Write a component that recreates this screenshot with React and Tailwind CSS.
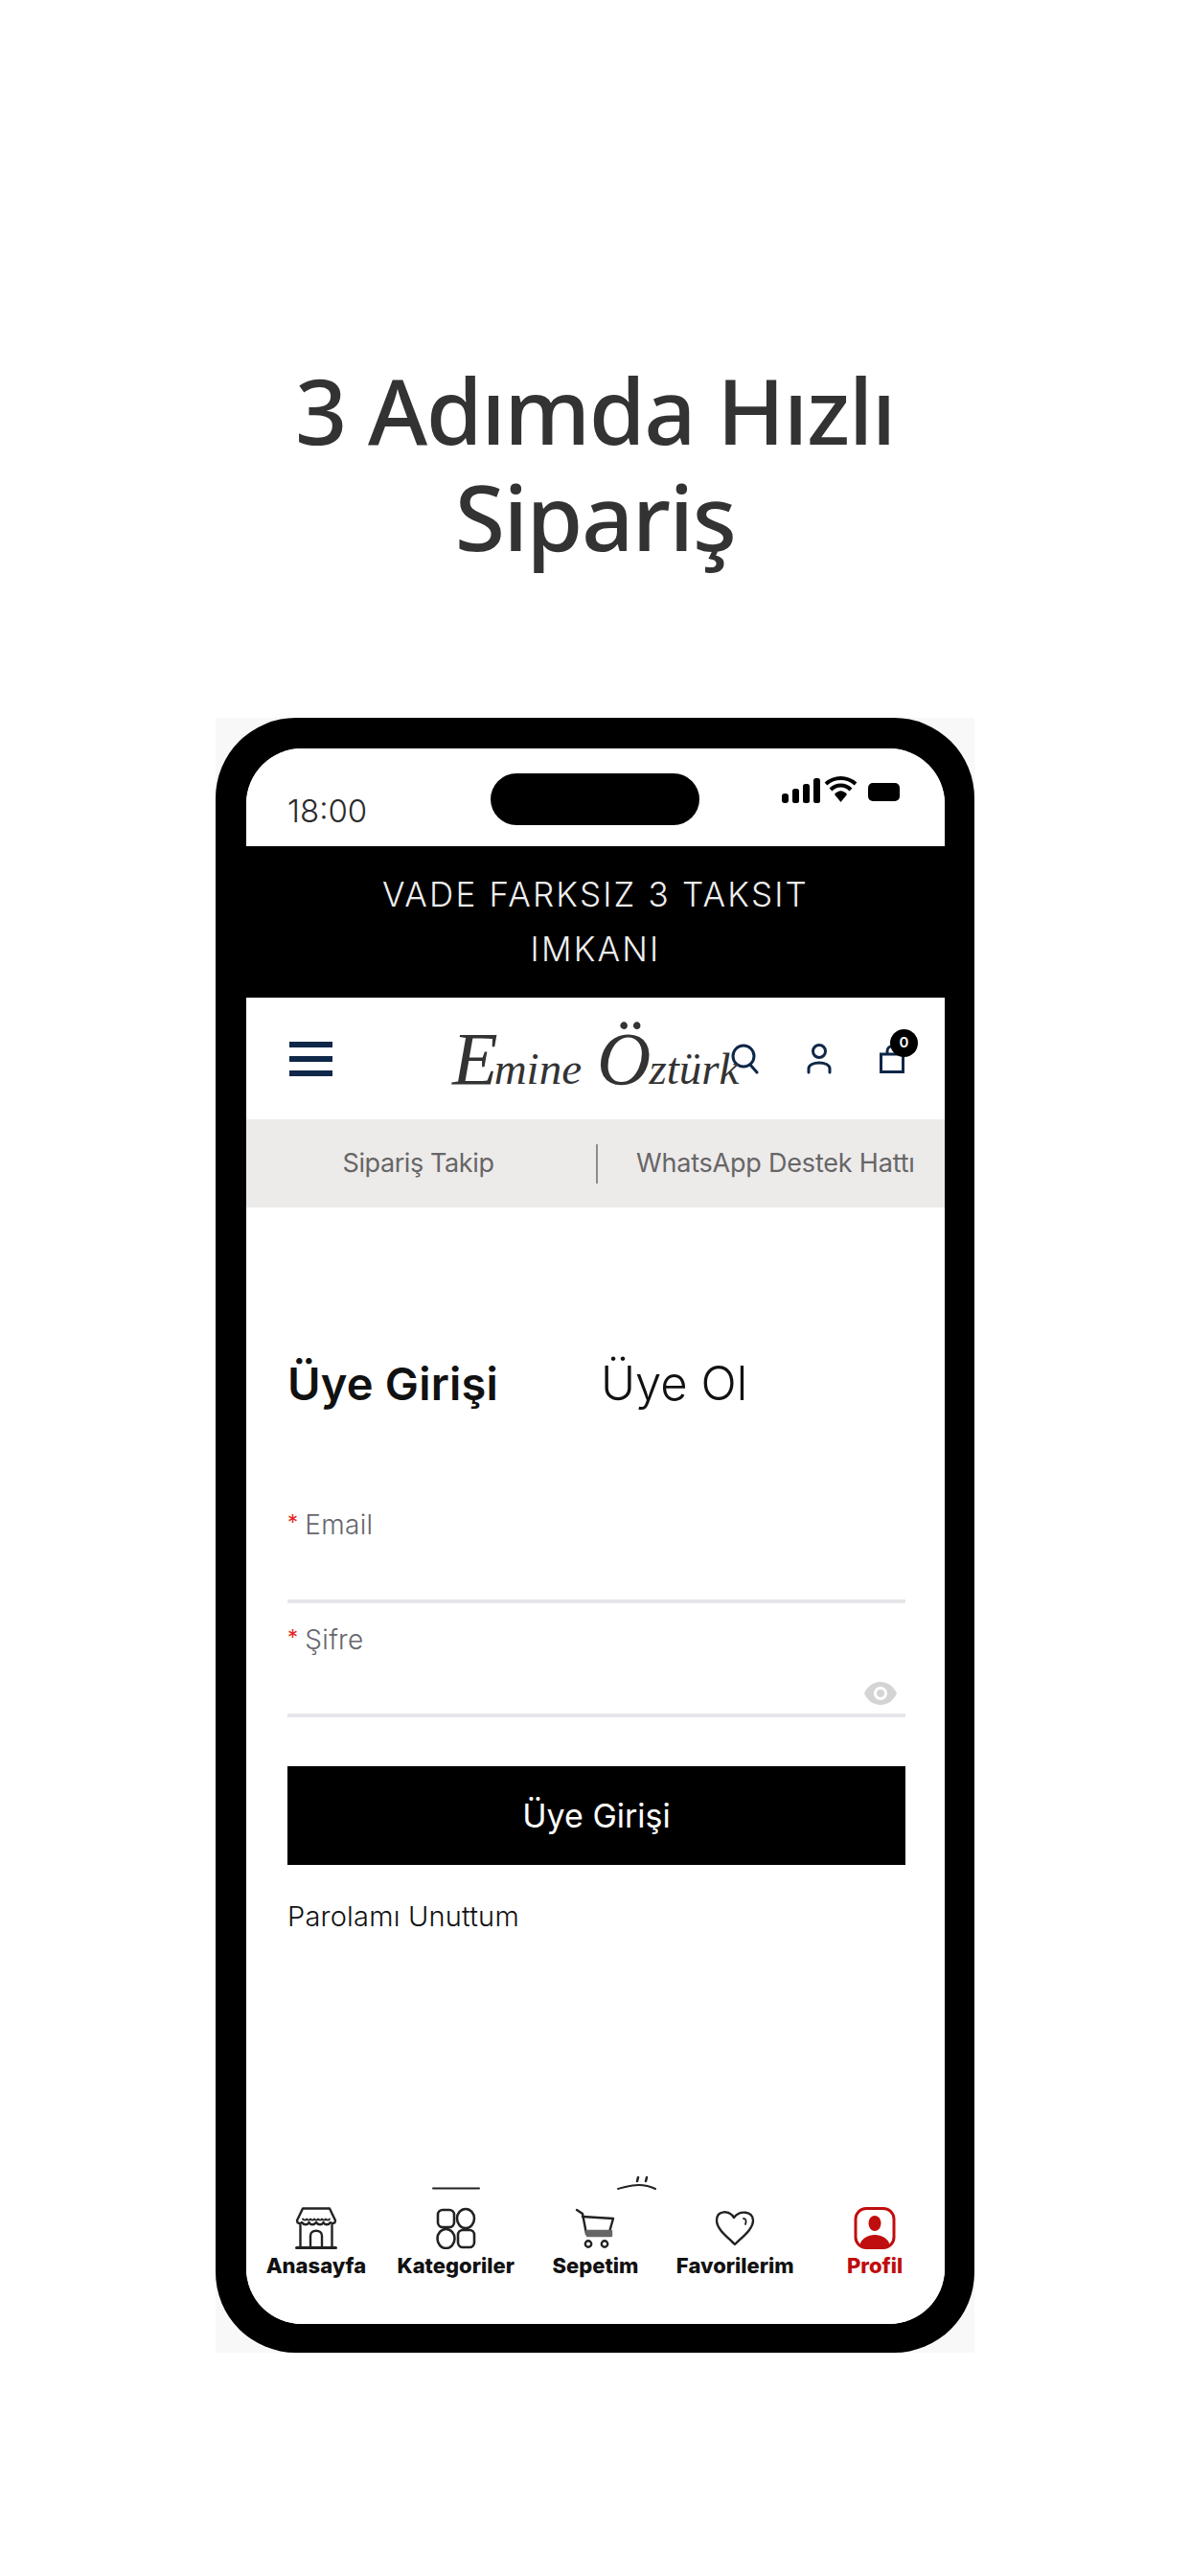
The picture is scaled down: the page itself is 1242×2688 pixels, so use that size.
import React from "react";

const ui = "font-['Inter',sans-serif]";

function StoreIcon() {
    return (
        <svg width="44" height="44" viewBox="0 0 44 44" fill="none" stroke="#222" strokeWidth="2.4" strokeLinejoin="round" strokeLinecap="round">
            <path d="M8 1.500H36L42 14C42 17 39 18 37 16C35 19 31 19 29.500 16C28 19 24 19 22 16C20 19 16 19 14.500 16C13 19 9 19 7 16C5 18 2 17 2 14Z" />
            <path d="M8 12.500C9.500 14 11 14 12 12.500C13.500 14 15 14 16 12.500C17.500 14 19 14 20 12.500C21.500 14 23 14 24 12.500C25.500 14 27 14 28 12.500C29.500 14 31 14 32 12.500C33.500 14 35 14 36 12.500" strokeWidth="1.8" />
            <path d="M5.500 19V41.500M38.500 19V41.500" />
            <path d="M1.500 42.500H42.500" strokeWidth="3" />
            <path d="M16 42V30C16 23 28 23 28 30V42" />
        </svg>
    );
}

function CategoryIcon() {
    return (
        <svg width="44" height="44" viewBox="0 0 44 44" fill="none" stroke="#222" strokeWidth="2.600">
            <rect x="3" y="3" width="17" height="18" rx="5" />
            <ellipse cx="32" cy="12" rx="9" ry="10" />
            <ellipse cx="11.500" cy="33" rx="9" ry="10" />
            <rect x="24" y="24" width="17" height="18" rx="5" />
        </svg>
    );
}

function CartIcon() {
    return (
        <svg width="44" height="44" viewBox="0 0 44 44" fill="none" stroke="#222" strokeWidth="2.400" strokeLinecap="round" strokeLinejoin="round">
            <path d="M3 3L9 7L13 28H38" />
            <path d="M9 10L41 12L37 26" />
            <path d="M13 25H39V30H14Z" fill="#666" stroke="#666" />
            <circle cx="15" cy="38.500" r="3.200" />
            <circle cx="32" cy="38.500" r="3.200" />
        </svg>
    );
}

function HeartIcon() {
    return (
        <svg width="44" height="44" viewBox="0 0 44 44" fill="none" stroke="#222" strokeWidth="2.400" strokeLinejoin="round" strokeLinecap="round">
            <path d="M22 39C14 31 3 23 3 14C3 3 16 3 21 11C27 3 41 4 41 14C41 23 30 31 22 39Z" />
            <path d="M31 12C34 12 34 15 33 18" strokeWidth="1.800" />
        </svg>
    );
}

function ProfileIcon() {
    return (
        <svg width="44" height="44" viewBox="0 0 44 44" fill="none">
            <rect x="2" y="1.500" width="40" height="41" rx="11" stroke="#c00d0d" strokeWidth="3" />
            <ellipse cx="22" cy="17" rx="6.500" ry="8" fill="#c00d0d" />
            <path d="M6 41C7 33 15 29 22 29C29 29 37 33 38 41Z" fill="#c00d0d" />
        </svg>
    );
}

const navItems = [
    { label: "Anasayfa", icon: <StoreIcon /> },
    { label: "Kategoriler", icon: <CategoryIcon /> },
    { label: "Sepetim", icon: <CartIcon /> },
    { label: "Favorilerim", icon: <HeartIcon /> },
    { label: "Profil", icon: <ProfileIcon />, active: true },
];

function StatusBar() {
    return (
        <div className="relative flex h-[102px] shrink-0 items-center justify-between bg-white pl-[43px] pr-[46px]">
            <span className={`${ui} mt-[28px] text-[33px] font-light leading-none text-[#2a2a2a]`}>18:00</span>
            <div className="absolute left-[255px] top-[26px] h-[54px] w-[218px] rounded-full bg-black" />
            <svg width="124" height="30" viewBox="0 0 124 30" className="mb-[16px]">
                <rect x="0" y="19" width="7" height="10" rx="3" />
                <rect x="11" y="14" width="7" height="15" rx="2.500" />
                <rect x="22" y="9" width="7" height="20" rx="2.500" />
                <rect x="33" y="3" width="7" height="26" rx="2.500" />
                <path d="M46 9C55 1 68 1 77 9" fill="none" stroke="#000" strokeWidth="4" />
                <path d="M51 15C57 9 66 9 72 15" fill="none" stroke="#000" strokeWidth="4" />
                <path d="M55 20C59 15 64 15 68 20L61.500 28Z" />
                <rect x="90" y="8" width="33" height="19" rx="5" />
            </svg>
        </div>
    );
}

function Header() {
    return (
        <div className="relative flex h-[127px] shrink-0 items-center justify-between bg-white pl-[45px] pr-[42px]">
            <div className="flex w-[45px] flex-col gap-[9px]">
                <div className="h-[6px] bg-[#0f2748]" />
                <div className="h-[6px] bg-[#0f2748]" />
                <div className="h-[6px] bg-[#0f2748]" />
            </div>
            <div className="flex items-center gap-[50px]">
                <svg width="30" height="32" viewBox="0 0 30 32" fill="none" stroke="#0f2748" strokeWidth="3" strokeLinecap="round">
                    <circle cx="14" cy="13" r="11" />
                    <path d="M21 22L28 30" />
                </svg>
                <svg width="26" height="32" viewBox="0 0 26 32" fill="none" stroke="#0f2748" strokeWidth="3" strokeLinecap="round">
                    <circle cx="13" cy="8" r="6.500" />
                    <path d="M2 30V26C2 18 24 18 24 26V30" />
                </svg>
                <div className="relative">
                    <svg width="26" height="30" viewBox="0 0 26 30" fill="none" stroke="#0f2748" strokeWidth="3">
                        <path d="M1.500 10H24.500V28.500H1.500Z" />
                        <path d="M8 10V7C8 0 18 0 18 7V10" />
                    </svg>
                    <div className={`${ui} absolute right-[-14px] top-[-16px] flex h-[29px] w-[29px] items-center justify-center rounded-full bg-black text-[15px] font-semibold text-white`}>0</div>
                </div>
            </div>
            <span className="absolute left-[215px] top-[22px] flex items-baseline whitespace-nowrap font-['Liberation_Serif',serif] text-[47px] italic leading-[84px] text-[#333333]">
                <span className="text-[78px]">E</span>
                <span className="ml-[-4px] mr-[16px]">mine</span>
                <span className="text-[78px]">Ö</span>
                <span className="ml-[-2px]">ztürk</span>
            </span>
        </div>
    );
}

function Field({ label, children }) {
    return (
        <div className={ui}>
            <div className="flex h-[40px] items-center text-[28px] font-light tracking-[0.3px] text-[#66666c]">
                <span className="mr-[7px] mt-[-6px] text-[22px] font-normal text-[#e02424]">*</span>
                {label}
            </div>
            {children}
        </div>
    );
}

function LoginForm() {
    return (
        <div className={`${ui} flex min-h-0 flex-1 flex-col bg-white`}>
            <div className="pl-[43px] pr-[41px]">
                <div className="mt-[154px] flex h-[60px] items-center text-[#111]">
                    <span className="w-[327px] text-[47px] font-semibold tracking-[0.2px]">Üye Girişi</span>
                    <span className="text-[49px] font-light">Üye Ol</span>
                </div>
                <div className="mt-[97px]">
                    <Field label="Email">
                        <div className="h-[62px] border-b-4 border-[#e6e6ea]" />
                    </Field>
                </div>
                <div className="mt-[18px]">
                    <Field label="Şifre">
                        <div className="flex h-[61px] items-start justify-end border-b-4 border-[#e6e6ea] pr-[9px] pt-[24px]">
                            <svg width="34" height="24" viewBox="0 0 34 24">
                                <path fillRule="evenodd" fill="#d4d4d4" d="M17 0C25 0 31 5 34 12C31 19 25 24 17 24C9 24 3 19 0 12C3 5 9 0 17 0ZM17 5C13 5 10 8 10 12C10 16 13 19 17 19C21 19 24 16 24 12C24 8 21 5 17 5Z" />
                                <circle cx="17" cy="12" r="4" fill="#d4d4d4" />
                            </svg>
                        </div>
                    </Field>
                </div>
                <button className="mt-[51px] flex h-[103px] w-full items-center justify-center bg-black text-[34px] font-normal text-white">Üye Girişi</button>
                <div className="mt-[34px] flex h-[40px] items-center text-[29px] font-light tracking-[0.2px] text-[#111111]">Parolamı Unuttum</div>
            </div>
            <svg width="729" height="24" viewBox="0 0 729 24" fill="none" stroke="#222" strokeLinecap="round" className="mt-auto mb-[3px] shrink-0">
                <path d="M195 20.500H243" strokeWidth="2" />
                <path d="M388 21C399 18 412 14 427 21" strokeWidth="2" />
                <path d="M409 9L408 13M418 9L417 13" strokeWidth="2.500" />
            </svg>
        </div>
    );
}

export default function App() {
    return (
        <div className="flex h-[2688px] w-[1242px] flex-col items-center bg-white">
            <h1 className="mt-[372px] w-full text-center font-['Noto_Sans',sans-serif] text-[95px] font-medium leading-[111px] tracking-[-1.5px] text-[#333333]">
                3 Adımda Hızlı<br />Sipariş
            </h1>
            <div className="mt-[155px] h-[1706px] w-[792px] bg-[#f8f8f8]">
                <div className="h-full rounded-[84px] bg-black pb-[30px] pl-[32px] pr-[31px] pt-[32px]">
                    <div className="flex h-full flex-col overflow-hidden rounded-[58px] bg-white">
                        <StatusBar />
                        <div className={`${ui} flex h-[158px] shrink-0 flex-col items-center justify-center bg-black text-center text-[35px] font-light leading-[57px] tracking-[2.2px] text-[#eeeeee]`}>
                            <span>VADE FARKSIZ 3 TAKSIT</span>
                            <span>IMKANI</span>
                        </div>
                        <Header />
                        <div className={`${ui} flex h-[92px] shrink-0 items-center bg-[#edeaea] text-[27px] text-[#666666]`}>
                            <div className="w-[365px] pr-[6px] text-center tracking-[-0.4px]">Sipariş Takip</div>
                            <div className="h-[41px] w-[2px] bg-[#8c8c8c]" />
                            <div className="whitespace-nowrap pl-[40px] tracking-[-0.2px]">WhatsApp Destek Hattı</div>
                        </div>
                        <LoginForm />
                        <div className="grid h-[135px] shrink-0 grid-cols-5 bg-white pt-[13px]">
                            {navItems.map((item) => (
                                <div key={item.label} className="flex flex-col items-center">
                                    {item.icon}
                                    <span className={`${ui} mt-[3px] whitespace-nowrap text-[22px] font-extrabold leading-[28px] ${item.active ? "text-[#c00d0d]" : "text-[#111111]"}`}>{item.label}</span>
                                </div>
                            ))}
                        </div>
                    </div>
                </div>
            </div>
        </div>
    );
}
